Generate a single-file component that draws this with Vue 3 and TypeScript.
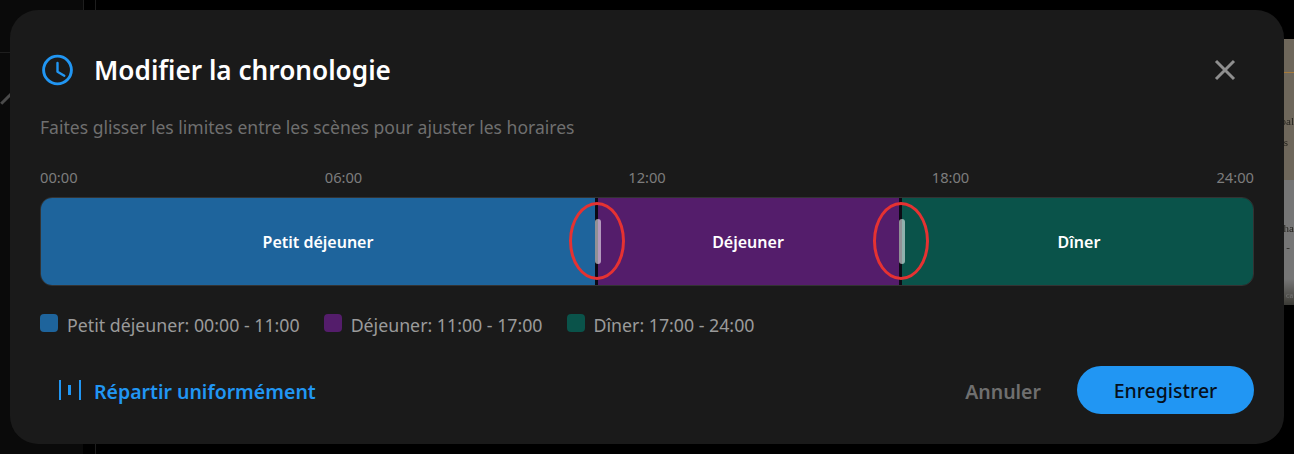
<script setup lang="ts">
interface Segment { name: string; start: string; end: string; cls: string; width: number }
const segments: Segment[] = [
  { name: 'Petit déjeuner', start: '00:00', end: '11:00', cls: 'blue', width: 555 },
  { name: 'Déjeuner', start: '11:00', end: '17:00', cls: 'purple', width: 304 },
  { name: 'Dîner', start: '17:00', end: '24:00', cls: 'green', width: 353 },
]
const ticks = ['00:00', '06:00', '12:00', '18:00', '24:00']
</script>

<template>
  <div class="stage">
    <div class="bg-side"></div>
    <div class="bg-line v1"></div>
    <div class="bg-line v2"></div>
    <div class="bg-line h1"></div>
    <div class="bg-diag"></div>
    <div class="bg-page">
      <span class="rule"></span>
      <span class="pg p1">pal</span>
      <span class="pg p2">s</span>
      <span class="pg p3">tha</span>
      <span class="pg p4">-</span>
      <span class="pg p5">ca</span>
    </div>
    <section class="dialog">
      <header class="head">
        <svg class="clock" viewBox="0 0 32 32" width="32" height="32" fill="none" stroke="#2196f3" stroke-width="2.9" stroke-linecap="round">
          <circle cx="15.5" cy="16" r="13.9" />
          <path d="M15.5 9v8.7l6.8 4" stroke-width="2.4" stroke-linejoin="round" />
        </svg>
        <h2 class="title">Modifier la chronologie</h2>
        <svg class="close" viewBox="0 0 24 24" width="24" height="24" stroke="#8f8f8f" stroke-width="3" fill="none">
          <path d="M3 3l18 18M21 3L3 21" />
        </svg>
      </header>
      <p class="hint">Faites glisser les limites entre les scènes pour ajuster les horaires</p>
      <div class="ticks">
        <span v-for="t in ticks" :key="t" class="tick">{{ t }}</span>
      </div>
      <div class="track">
        <div
          v-for="(s, i) in segments"
          :key="s.name"
          class="segment"
          :class="s.cls"
          :style="{ width: s.width + 'px' }"
        >
          {{ s.name }}
          <template v-if="i < 2">
            <span class="divider"></span>
            <span class="grip"></span>
            <span class="ring"></span>
          </template>
        </div>
      </div>
      <div class="legend">
        <div v-for="s in segments" :key="s.name" class="legend-item">
          <span class="swatch" :class="s.cls"></span>
          <span>{{ s.name }}: {{ s.start }} - {{ s.end }}</span>
        </div>
      </div>
      <footer class="foot">
        <button class="even">
          <svg viewBox="0 0 22 20" width="22" height="20" fill="#2196f3">
            <rect x="0" y="0" width="2" height="20" />
            <rect x="9" y="5" width="3" height="10" />
            <rect x="20" y="0" width="2" height="20" />
          </svg>
          <span class="label">Répartir uniformément</span>
        </button>
        <div class="actions">
          <button class="cancel"><span class="label">Annuler</span></button>
          <button class="save"><span class="label-save">Enregistrer</span></button>
        </div>
      </footer>
    </section>
  </div>
</template>

<style>
html, body { margin: 0; background: #000; }
</style>

<style scoped>
.stage {
  position: relative;
  width: 1294px;
  height: 454px;
  box-sizing: border-box;
  padding: 10px;
  background: #000;
  overflow: hidden;
  font-family: "Noto Sans", "Open Sans", sans-serif;
}
.bg-side { position: absolute; left: 0; top: 0; width: 83px; height: 454px; background: #0a0a0a; }
.bg-line { position: absolute; background: #1e1e1e; }
.v1 { left: 83px; top: 0; width: 1px; height: 10px; }
.v2 { left: 95px; top: 0; width: 1px; height: 454px; }
.h1 { left: 0; top: 52px; width: 10px; height: 1px; }
.bg-diag {
  position: absolute;
  left: -1px;
  top: 97px;
  width: 15px;
  height: 3px;
  background: #4a4a4a;
  transform: rotate(-45deg);
}
.bg-page {
  position: absolute;
  left: 1270px;
  top: 39px;
  width: 24px;
  height: 266px;
  background: linear-gradient(#6e675b 0 141px, #767676 141px 240px, #45443f 262px, #3a3a36 266px);
  font-family: "Liberation Serif", serif;
  font-size: 11px;
  line-height: 12px;
  color: #26241f;
  filter: blur(0.3px);
}
.rule { position: absolute; left: 0; right: 0; top: 33px; height: 1px; background: #a5793a; }
.pg { position: absolute; right: 0; }
.p1 { top: 76px; }
.p2 { top: 97px; right: 6px; }
.p3 { top: 183px; }
.p4 { top: 202px; right: 4px; }
.p5 { top: 251px; right: 1px; font-size: 8px; color: #777; }
.dialog {
  position: relative;
  box-sizing: border-box;
  width: 1274px;
  height: 434px;
  padding: 30px;
  background: #1a1a1a;
  border-radius: 28px;
  display: flex;
  flex-direction: column;
}
.head { display: flex; align-items: center; height: 60px; }
.clock { margin-left: 2px; }
.title {
  margin: 0 0 0 20px;
  flex: 1;
  font-size: 26.2px;
  font-weight: 600;
  color: #fff;
}
.close { margin-right: 17px; }
.hint {
  margin: 16px 0 0;
  font-size: 17.55px;
  line-height: 22px;
  color: #6f6f6f;
}
.ticks {
  display: flex;
  justify-content: space-between;
  margin-top: 30px;
  font-size: 14.7px;
  line-height: 18px;
  color: #7d7d7d;
}
.tick { width: 0; display: flex; justify-content: center; white-space: nowrap; }
.tick:first-child { justify-content: flex-start; }
.tick:last-child { justify-content: flex-end; }
.track {
  display: flex;
  margin-top: 11px;
  height: 89px;
  box-sizing: border-box;
  border: 1px solid #333;
  border-radius: 12px;
  overflow: hidden;
}
.segment {
  position: relative;
  flex: none;
  box-sizing: border-box;
  display: flex;
  align-items: center;
  justify-content: center;
  font-size: 16px;
  font-weight: 600;
  color: #fff;
}
.blue { background: #1e649c; }
.purple { background: #541d6b; }
.green { background: #0a534a; }
.segment.blue { padding-right: 1px; }
.segment.green { padding-left: 5px; }
.divider {
  position: absolute;
  right: -2px;
  top: 0;
  bottom: 0;
  width: 3px;
  background: #0c0a14;
  z-index: 1;
}
.grip {
  position: absolute;
  right: -5px;
  top: 21px;
  width: 6px;
  height: 45px;
  border-radius: 3px;
  background: rgba(255, 255, 255, 0.55);
  z-index: 2;
}
.ring {
  position: absolute;
  right: -29px;
  top: 4px;
  width: 56px;
  height: 78px;
  box-sizing: border-box;
  border: 3px solid #e53232;
  border-radius: 50%;
  z-index: 3;
}
.legend {
  display: flex;
  gap: 24px;
  margin-top: 28px;
}
.legend-item {
  display: flex;
  align-items: center;
  gap: 9px;
  font-size: 17.75px;
  line-height: 22px;
  color: #9a9a9a;
}
.swatch {
  width: 18px;
  height: 18px;
  border-radius: 4px;
  margin-top: -4px;
}
.foot {
  display: flex;
  align-items: center;
  justify-content: space-between;
  margin-top: 30px;
}
button {
  border: 0;
  background: none;
  font-family: inherit;
  padding: 0;
}
.label { display: block; padding-top: 3px; }
.label-save { display: block; padding-top: 1px; }
.even {
  display: flex;
  align-items: center;
  gap: 13px;
  margin-left: 19px;
  font-size: 19.5px;
  font-weight: 600;
  color: #2196f3;
}
.actions { display: flex; align-items: center; gap: 36px; }
.cancel { font-size: 19.5px; font-weight: 600; color: #6f6f6f; }
.save {
  width: 177px;
  height: 48px;
  border-radius: 24px;
  background: #2196f3;
  color: #06101c;
  font-size: 19.5px;
  font-weight: 500;
}
</style>
